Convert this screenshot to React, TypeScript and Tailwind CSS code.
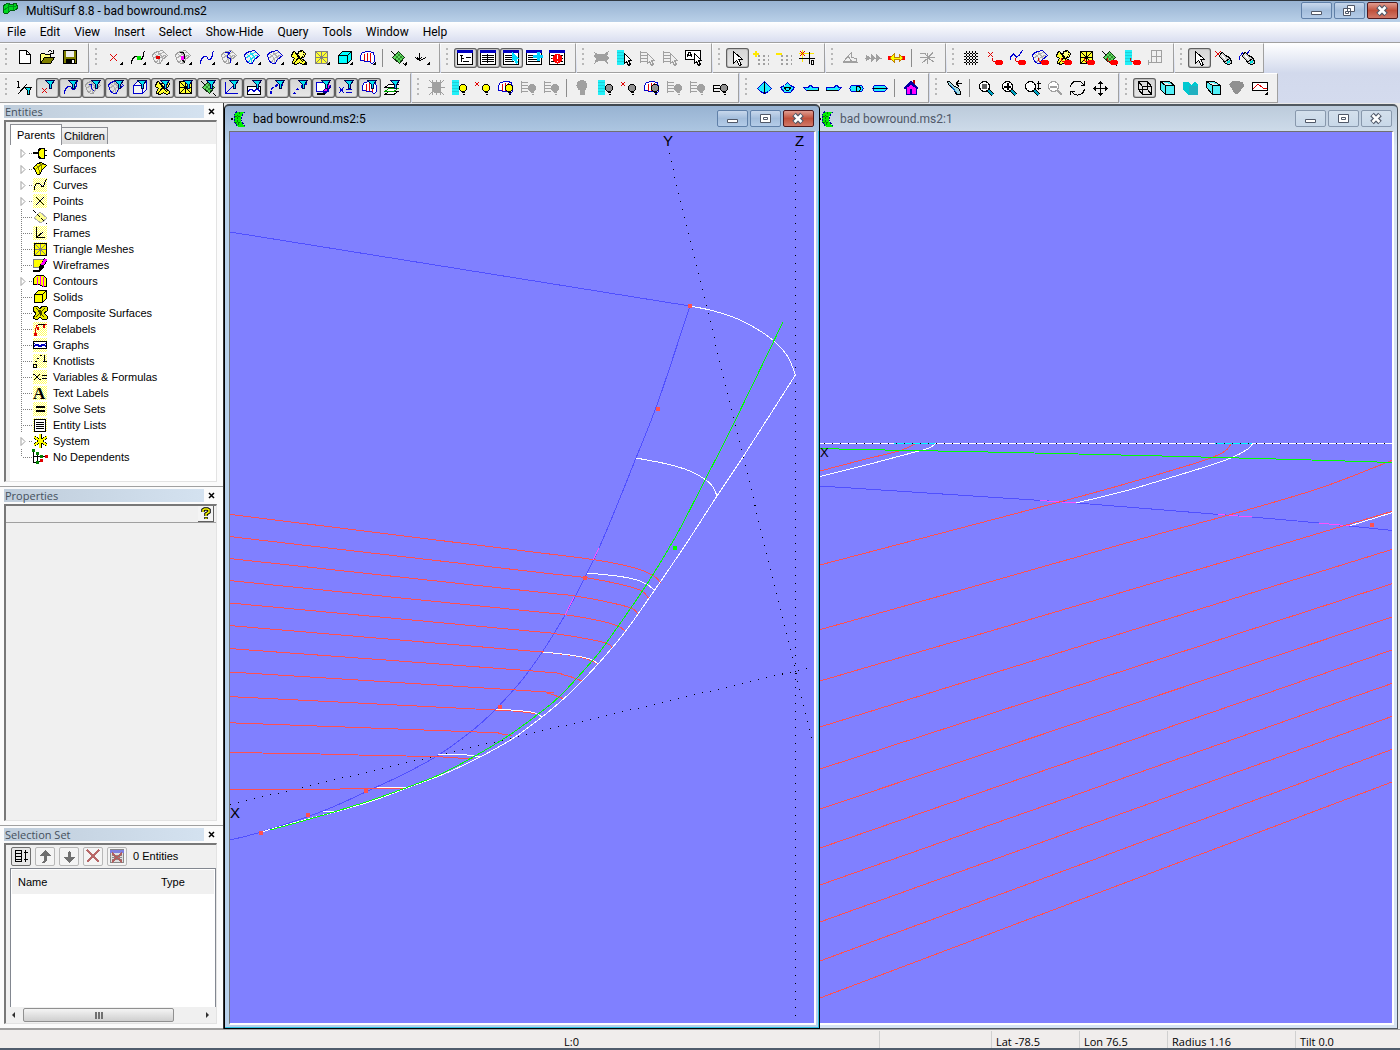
import React from 'react';
import clsx from 'clsx';

type Point = [number, number];

interface Tool {
  label: string;
  icon: React.ReactNode;
  pressed?: boolean;
  menu?: boolean;
}

type ToolItem = Tool | 'sep';

// Catmull-Rom through the points, written out as cubic segments
const spline = (pts: Point[]) => {
  let d = `M${pts[0][0]} ${pts[0][1]}`;
  for (let i = 0; i < pts.length - 1; i++) {
    const p0 = pts[i - 1] || pts[i];
    const p1 = pts[i];
    const p2 = pts[i + 1];
    const p3 = pts[i + 2] || p2;
    d += `C${p1[0] + (p2[0] - p0[0]) / 6} ${p1[1] + (p2[1] - p0[1]) / 6} ${p2[0] - (p3[0] - p1[0]) / 6} ${p2[1] - (p3[1] - p1[1]) / 6} ${p2[0]} ${p2[1]}`;
  }
  return d;
};

/* ---------- toolbar glyphs, all on a 23x20 grid ---------- */

const Cross = ({ c = '#e00000', x = 7, y = 6, s = 7 }) => (
  <path d={`M${x} ${y}l${s} ${s}M${x + s} ${y}l${-s} ${s}`} stroke={c} fill="none" />
);

const Curve = ({ c = '#000' }) => (
  <path d="M5.500 15.500v-2l2-4 2-1h2l2 3h2l2-4v-3l1-1" stroke={c} fill="none" />
);

const Surface = ({ c = '#0000d0', inner = '#b0b0b0', fill = 'none' }) => (
  <g fill="none">
    <path d="M6 6q4.500 3 5 9M9 4.500q4.500 3 4.500 8M5 10q4-3.500 10-6M7.500 14q3-4.500 9-7" stroke={inner} />
    <path d="M3.500 7.500l1-2 4-2 5-1 5 5-5 4-2.500 4H8.500L5.500 13z" fill={fill} stroke={c} />
  </g>
);

const Composite = ({ c = '#000' }) => (
  <g stroke={c} fill="#ffff30">
    <path d="M5.500 4.500l2-1 3 3 1-3 4-1 3 3-1 3-3 2 4 3v2l-3 1-3-2-3 2-4-1v-2l2-3-3-2z" />
    <path d="M8 5l8 9M16 5l-9 10" fill="none" />
    <circle cx="14" cy="6.500" r="3" fill="#ffff80" strokeDasharray="1 1" />
  </g>
);

const Mesh = ({ c = '#808080' }) => (
  <g>
    <path d="M5.500 3.500h12v12h-12z" fill="#ffff30" stroke={c} />
    <path d="M5.500 3.500l12 12M17.500 3.500l-12 12M11.500 3.500v12M5.500 9.500h12" stroke={c} fill="none" />
  </g>
);

const Cube = ({ c = '#000', face = '#0ff' }) => (
  <path d="M5.500 7.500l4-4h9v8l-4 4h-9zM5.500 7.500h9v8M14.500 7.500l4-4" stroke={c} fill={face} />
);

const Contours = () => (
  <g fill="#fff">
    <path d="M5 12.500q-1-7 2-8 5-2 10 0 2 2 1 10l-2 1-3-2h-4l-2-1z" stroke="#0000d0" />
    <path d="M8.500 6v7M11.500 5v8M14.500 5v9" stroke="#e00000" fill="none" />
  </g>
);

const Plane = () => (
  <g>
    <path d="M5.500 9.500l6-6 6 6-5 6z" fill="#60d860" stroke="#103010" />
    <path d="M7.500 11.500l6-6M9.500 13.500l6-6M8.500 7.500l6 6M10.500 5.500l6 6" stroke="#106010" strokeOpacity=".6" />
    <path d="M4 3l4 4M16 15l3 3" stroke="#000" />
  </g>
);

const Funnel = () => (
  <path d="M9.500 2.500h9l-3 4v4h-2v-4z" fill="#00e0f0" stroke="#000050" />
);

const Pin = () => (
  <g>
    <path d="M9.500 9.500v3l3 2" stroke="#e00000" fill="none" />
    <ellipse cx="16" cy="14.500" rx="4" ry="2.500" fill="#f00" />
  </g>
);

const Bulb = ({ c = '#ff0', line = '#000' }) => (
  <g>
    <circle cx="15" cy="10" r="3.500" fill={c} stroke={line} />
    <path d="M13.500 14.500h3M14.500 16.500h2" stroke={line} />
  </g>
);

const Rows = ({ c = '#000' }) => (
  <path d="M4.500 3v12M4 4.500h7M4 7.500h7M4 10.500h7M4 13.500h7" stroke={c} fill="none" />
);

const CyanList = () => (
  <g>
    <path d="M4 2h7v15H4z" fill="#20f0f8" />
    <path d="M4 4.500h7M4 7.500h7M4 10.500h7M4 13.500h7" stroke="#20d0d8" />
  </g>
);

const Arrow = ({ x = 0, y = 0, c = '#000', fill = '#fff' }) => (
  <path d={`M${9.5 + x} ${3.5 + y}v10l2-2 2 4 2-1-2-4h3z`} fill={fill} stroke={c} />
);

const PaneFrame = ({ children }: { children?: React.ReactNode }) => (
  <g>
    <path d="M3.500 2.500h15v14h-15z" fill="#fff" stroke="#000" />
    <path d="M3 2h16v3H3z" fill="#0000c0" />
    {children}
  </g>
);

const Burst = ({ c = '#a0a0a0' }) => (
  <g>
    <path d="M7 4h9v9l-2 2H9l-2-2z" fill={c} />
    <path d="M4 2l15 15M19 2L4 17M3 9.500h17M7.500 2v15M11.500 2v15M15.500 2v15" stroke={c} />
  </g>
);

const Hull = ({ d, extra }: { d: string; extra?: string }) => (
  <g>
    <path d={d} fill="#20f0ff" stroke="#0000d0" />
    {extra && <path d={extra} stroke="#000" fill="none" />}
  </g>
);

const Lens = ({ c = '#000', handle = '#00a0c0', children }: { c?: string; handle?: string; children?: React.ReactNode }) => (
  <g>
    <path d="M14 12l5 5" stroke="#000" strokeWidth="4" strokeOpacity={c === '#000' ? 1 : 0} />
    <path d="M14 12l5 5" stroke={handle} strokeWidth="2" />
    <circle cx="10.500" cy="8.500" r="5" fill="#fff" stroke={c} />
    {children}
  </g>
);

const Torch = () => (
  <g>
    <path d="M9.500 5.500l2-1 3 3 4 2 2 3v3l-3 1-3-1-3-4-3-3z" fill="#d0d0d0" stroke="#000" />
    <path d="M14 13.500l5-3M15 15.500l5-3" stroke="#000" />
    <path d="M16 15l3-2" stroke="#0dd" strokeWidth="2" />
    <path d="M10 6l5 6" stroke="#fff" />
  </g>
);

const gray = '#a0a0a0';

const topBands: ToolItem[][] = [
  [
    { label: 'New', icon: <path d="M6.500 2.500h7l4 4v9h-11zM13.500 2.500v4h4" fill="#fff" stroke="#000" /> },
    { label: 'Open', icon: (
      <g stroke="#000">
        <path d="M4.500 15.500v-9l1-1h3l1 1h5v3" fill="#ffff80" />
        <path d="M4.500 15.500l4-6h10l-4 6z" fill="#808000" />
        <path d="M11.500 4.500q2.500-4 5 0M17.500 2v3.500H14" fill="none" />
      </g>
    ) },
    { label: 'Save', icon: (
      <g>
        <path d="M4.500 2.500h13v13h-13z" fill="#808000" stroke="#000" />
        <path d="M7 3h8v6H7z" fill="#efefef" />
        <path d="M7 11h9v5H7z" fill="#000" />
        <path d="M13 12h2v3h-2z" fill="#fff" />
      </g>
    ) },
  ],
  [
    { label: 'Point', menu: true, icon: <Cross /> },
    { label: 'Bead', menu: true, icon: <g><Curve /><circle cx="13" cy="10" r="2.500" fill="#00e000" /></g> },
    { label: 'Magnet', menu: true, icon: <g><Surface c={gray} /><circle cx="9" cy="9.500" r="2" fill="#e00000" /></g> },
    { label: 'Ring', menu: true, icon: <g><Surface c={gray} /><path d="M8 4.500h3q3 4 0 8l2 2" stroke="#000" fill="none" /><circle cx="10.500" cy="10" r="2" fill="#f0f" /></g> },
    { label: 'Curve', menu: true, icon: <Curve c="#0000d0" /> },
    { label: 'Snake', menu: true, icon: <g><Surface c={gray} /><path d="M7 5l5-1-3 5 4 2-1 4" stroke="#0000d0" fill="none" /></g> },
    { label: 'Trimmed surface', menu: true, icon: <Surface inner="#20d8f0" /> },
    { label: 'Surface', menu: true, icon: <Surface /> },
    { label: 'Composite surface', menu: true, icon: <Composite /> },
    { label: 'Triangle mesh', menu: true, icon: <Mesh /> },
    { label: 'Solid', menu: true, icon: <Cube /> },
    { label: 'Contours', menu: true, icon: <Contours /> },
    'sep',
    { label: 'Plane', menu: true, icon: <Plane /> },
    { label: 'Frame', menu: true, icon: <path d="M9.500 5v7M9.500 12.500l7-3M9.500 12.500l-4-3M7 9l2 3 3-3" stroke="#000" fill="none" /> },
  ],
  [
    { label: 'Entities pane', pressed: true, icon: <PaneFrame><path d="M6 7.500h3M7.500 7v7M7 10.500h3M12 9.500h5M9 13.500h6" stroke="#000" /></PaneFrame> },
    { label: 'Properties pane', pressed: true, icon: <PaneFrame><path d="M5 7.500h12M5 9.500h12M5 11.500h12M5 13.500h12M10.500 6v9" stroke="#000" /></PaneFrame> },
    { label: 'Selection pane', pressed: true, icon: <PaneFrame><path d="M5 7.500h9M5 9.500h9M5 11.500h9M5 13.500h9" stroke="#000" /><path d="M12 4v9l2-1 2 4 2-1-1-4h3z" fill="#00e0ff" /></PaneFrame> },
    { label: 'Surface manager', icon: <PaneFrame><path d="M5 7.500h12M5 9.500h7M5 11.500h12M5 13.500h12" stroke="#000" /><path d="M10 7h4V4h3v3h3v3h-3v3h-3v-3h-4z" fill="#00d0ff" /></PaneFrame> },
    { label: 'Error manager', icon: <PaneFrame><path d="M5 7.500h12M5 10.500h12M5 13.500h12" stroke="#000" /><circle cx="11.500" cy="10.500" r="5" fill="#f00" /><path d="M11 7h1v4h-1zM11 13h1v1h-1z" fill="#fff" /></PaneFrame> },
  ],
  [
    { label: 'Clear selection', icon: <path d="M4 4l4 2h6l5-3-2 5 2 2-2 2 1 4-4-3H9l-5 3 2-5-2-3 1-2z" fill={gray} /> },
    { label: 'Select by list', icon: <g><CyanList /><Arrow x={2} y={2} /></g> },
    { label: 'Select parents', icon: <g><Rows c={gray} /><Arrow x={2} y={2} c={gray} fill="#efefef" /></g> },
    { label: 'Select children', icon: <g><Rows c={gray} /><Arrow x={2} y={2} c={gray} fill="#efefef" /></g> },
    { label: 'Select by name', icon: <g><path d="M3.500 2.500h15v9h-15z" fill="#fff" stroke="#000" /><path d="M5 9l2-5h1l2 5M6 7.500h3" stroke="#000" fill="none" /><Arrow x={3} y={2} /></g> },
  ],
  [
    { label: 'Select mode', pressed: true, icon: <path d="M7.500 3.500v12l3-3 3 5 2-1-3-5h4z" fill="#fff" stroke="#000" /> },
    { label: 'Snap add', icon: <g><path d="M9 8h11M9 12h11M9 16h11" stroke={gray} strokeWidth="2" strokeDasharray="2 3" /><path d="M4 6h6M7 3v6" stroke="#ffe800" strokeWidth="2" /></g> },
    { label: 'Snap remove', icon: <g><path d="M9 8h11M9 12h11M9 16h11" stroke={gray} strokeWidth="2" strokeDasharray="2 3" /><path d="M4 6h6" stroke="#ffe800" strokeWidth="2" /></g> },
    { label: 'Digitize point', icon: <g><path d="M4 5.500h15M7.500 2v12" stroke="#ffe800" /><path d="M4 10.500h16M14.500 4v12" stroke="#000" /><Cross x={5} y={3} s={5} /><path d="M16.500 12v4h2v-4z" stroke="#000" fill="none" /></g> },
  ],
  [
    { label: 'Angle', icon: <path d="M4.500 13.500l8-9v5l5 1v3zM4 14.500h15M9 8l4 6" stroke={gray} fill="none" /> },
    { label: 'Distance', icon: <path d="M3 10h17M4 7v6l4-3zM9 6v8l4-4zM14 6v8l4-4z" stroke={gray} fill={gray} /> },
    { label: 'Clearance', icon: <g><path d="M3 8h4v4H3zM16 8h4v4h-4z" fill="#f00" /><path d="M5 10l4-4v3h5V6l4 4-4 4v-3H9v3z" fill="#ff0" stroke="#c08000" /></g> },
    'sep',
    { label: 'Intersections', icon: <path d="M4 5.500h5l3 4 5-5M4 9.500h15M6 15l6-5 6 4M11.500 5v11" stroke={gray} fill="none" /> },
  ],
  [
    { label: 'Grid', icon: <path d="M6.500 3v14M9.500 3v14M12.500 3v14M15.500 3v14M4 5.500h14M4 8.500h14M4 11.500h14M4 14.500h14" stroke="#000" strokeDasharray="2 1" /> },
    { label: 'Pin point', icon: <g><Cross x={5} y={4} s={5} /><Pin /></g> },
    { label: 'Pin curve', icon: <g><path d="M4.500 12v-3l3-3 3 3 3-2 3-5" stroke="#0000d0" fill="none" /><Pin /></g> },
    { label: 'Pin surface', icon: <g><Surface /><Pin /></g> },
    { label: 'Pin composite', icon: <g><Composite /><Pin /></g> },
    { label: 'Pin mesh', icon: <g><Mesh c="#000" /><Pin /></g> },
    { label: 'Pin plane', icon: <g><Plane /><Pin /></g> },
    { label: 'Pin list', icon: <g><CyanList /><Pin /></g> },
    { label: 'Pin layout', icon: <path d="M7.500 2.500h10v12h-10zM7 8.500h10M12.500 3v12M4 14.500h9M4.500 12v5" stroke={gray} fill="none" /> },
  ],
  [
    { label: 'Pick', pressed: true, icon: <path d="M7.500 3.500v12l3-3 3 5 2-1-3-5h4z" fill="#fff" stroke="#000" /> },
    { label: 'Light point', icon: <g><Cross x={4} y={3} s={6} /><Torch /></g> },
    { label: 'Light curve', icon: <g><path d="M5.500 12V9l3-4 4 2 3-5" stroke="#0000d0" fill="none" /><Torch /></g> },
  ],
];

const bottomBands: ToolItem[][] = [
  [
    { label: 'Toggle filters', icon: <g><path d="M4 3.500h1.500V9M4 9.500h3M5 16L14 6" stroke="#000" fill="none" /><path d="M11.500 9.500h7l-2 3v4h-2v-4z" fill="#00e0f0" stroke="#000" /></g> },
    { label: 'Filter points', pressed: true, icon: <g><Cross x={6} y={10} s={5} /><Funnel /></g> },
    { label: 'Filter curves', pressed: true, icon: <g><Curve c="#0000d0" /><Funnel /></g> },
    { label: 'Filter snakes', pressed: true, icon: <g><Surface c={gray} /><path d="M7 6h3l-1 4 3 3" stroke="#0000d0" fill="none" /><Funnel /></g> },
    { label: 'Filter surfaces', pressed: true, icon: <g><Surface /><Funnel /></g> },
    { label: 'Filter solids', pressed: true, icon: <g><Cube c="#0000d0" face="#f4f4f4" /><Funnel /></g> },
    { label: 'Filter composites', pressed: true, icon: <g><Composite /><Funnel /></g> },
    { label: 'Filter meshes', pressed: true, icon: <g><Mesh c="#000" /><Funnel /></g> },
    { label: 'Filter planes', pressed: true, icon: <g><Plane /><Funnel /></g> },
    { label: 'Filter frames', pressed: true, icon: <g><path d="M5.500 4v11.500h12M5.500 15.500l7-7" stroke="#0000d0" fill="none" /><Funnel /></g> },
    { label: 'Filter graphs', pressed: true, icon: <g><path d="M4.500 8.500h13v8h-13z" fill="#fff" stroke="#000" /><path d="M5 14q3-6 6 0 3-6 6 0" stroke="#0000d0" fill="none" /><Funnel /></g> },
    { label: 'Filter relabels', pressed: true, icon: <g><path d="M4.500 16v-4l3-3 4-2h5" stroke="#0000d0" fill="none" strokeWidth="2" strokeDasharray="3 2" /><Funnel /></g> },
    { label: 'Filter knotlists', pressed: true, icon: <g><path d="M5 16l4-5 4-3 5-2" stroke="#0000d0" fill="none" strokeWidth="2" strokeDasharray="2 3" /><Funnel /></g> },
    { label: 'Filter wireframes', pressed: true, icon: <g><path d="M4.500 4.500h12v9h-12z" fill="#fff" stroke="#0000d0" /><path d="M5 16h8" stroke="#000" strokeWidth="2" /><path d="M12 15l6-8" stroke="#0000a0" strokeWidth="4" /><path d="M13 13l4-6" stroke="#f0f" strokeWidth="2" /><Funnel /></g> },
    { label: 'Filter variables', pressed: true, icon: <g><path d="M4 9l5 6M9 9l-5 6M11 11h6M11 14h6" stroke="#0000d0" fill="none" /><Funnel /></g> },
    { label: 'Filter contours', pressed: true, icon: <g><Contours /><Funnel /></g> },
    { label: 'Layers', icon: <g><path d="M4 16.500h9l4-3H8z" fill="#fff" stroke="#000" /><path d="M4 13.500h9l4-3H8z" fill="#fff" stroke="#00a000" /><path d="M4 9.500h9l4-3H8z" fill="#fff" stroke="#000" /><Funnel /></g> },
  ],
  [
    { label: 'Show all', icon: <Burst /> },
    { label: 'Show list', icon: <g><CyanList /><Bulb /></g> },
    { label: 'Show points', icon: <g><Cross x={4} y={4} s={4} /><Bulb /></g> },
    { label: 'Show contours', icon: <g><Contours /><Bulb /></g> },
    { label: 'Show parents', icon: <g><Rows c={gray} /><Bulb c={gray} line={gray} /></g> },
    { label: 'Show children', icon: <g><Rows c={gray} /><Bulb c={gray} line={gray} /></g> },
    'sep',
    { label: 'Hide all', icon: <g><circle cx="11" cy="7.500" r="5.500" fill={gray} /><path d="M9 12h5v5H9z" fill={gray} /></g> },
    { label: 'Hide list', icon: <g><CyanList /><Bulb c="#909090" /></g> },
    { label: 'Hide points', icon: <g><Cross x={4} y={4} s={4} /><Bulb c="#909090" /></g> },
    { label: 'Hide contours', icon: <g><Contours /><Bulb c="#909090" /></g> },
    { label: 'Hide parents', icon: <g><Rows c={gray} /><Bulb c={gray} line={gray} /></g> },
    { label: 'Hide children', icon: <g><Rows c={gray} /><Bulb c={gray} line={gray} /></g> },
    { label: 'Hide unselected', icon: <g><path d="M4 7.500h7M4 10.500h7M4 13.500h7M4.500 7v7" stroke="#000" /><Bulb c="#909090" /></g> },
  ],
  [
    { label: 'Front view', icon: <Hull d="M4.500 10.500l3-3 4-4 4 4 3 3-3 3-4 2-4-2z" extra="M11.500 4v12" /> },
    { label: 'Back view', icon: <Hull d="M4.500 9.500l4-2 3-3 3 3 4 2-4 5h-6z" extra="M8 9.500h7M8 9l2 3h3l2-3" /> },
    { label: 'Port view', icon: <Hull d="M4.500 9.500h5l1-2h2l1 2h6v2l-1 1h-11z" extra="M8 12.500h11v-3" /> },
    { label: 'Starboard view', icon: <Hull d="M4.500 9.500h8l1-2h2l1 2h3l-3 3h-12z" extra="M4 12.500h12" /> },
    { label: 'Top view', icon: <Hull d="M4.500 10.500l2-3h10l2 3-2 3h-10z" extra="M11.500 8v5h3l1-2-1-3z" /> },
    { label: 'Bottom view', icon: <Hull d="M4.500 10.500l2-3h10l3 3-3 3h-10z" extra="M5 10.500h14" /> },
    'sep',
    { label: 'Home view', icon: <g><path d="M7 10l5-4 5 4v6H7z" fill="#f0f" stroke="#0000a0" /><path d="M14 2h2v5h-2z" fill="#c00000" /><path d="M5 11l7-7 7 7" stroke="#0000a0" strokeWidth="2" fill="none" /><path d="M11 11h2v5h-2z" fill="#0000a0" /></g> },
  ],
  [
    { label: 'Look at', icon: <g><path d="M4.500 3.500h2l4 4 5 3 2 3v3h-4l-2-4-6-6z" fill="#a0d8e0" stroke="#000" /><path d="M7 7l7 8" stroke="#0060c0" /><path d="M13 5.500h6M13 5.500l3-3M13 5.500l3 3" stroke="#000" /></g> },
    'sep',
    { label: 'Zoom area', icon: <Lens><path d="M8 6h5v5H8z" fill="#606060" /></Lens> },
    { label: 'Zoom in', icon: <Lens><path d="M7 8.500h7M10.500 5v7" stroke="#000" strokeWidth="2" /></Lens> },
    { label: 'Zoom', icon: <g><Lens /><path d="M18.500 3v9M17 5h4M17 10h4" stroke="#000" /></g> },
    { label: 'Zoom out', icon: <Lens c={gray} handle={gray}><path d="M7 8.500h7" stroke={gray} strokeWidth="2" /></Lens> },
    { label: 'Rotate', icon: <path d="M4.500 9q1-6 7-6 4 0 6 4M18.500 11q-1 6-7 6-4 0-6-4M18.500 3v4h-4M4.500 17v-4h4" stroke="#000" fill="none" /> },
    { label: 'Pan', icon: <g><path d="M5 10.500h13M11.500 4v13" stroke="#000" /><path d="M11.500 3l3 3h-6zM11.500 18l3-3h-6zM4 10.500l3-3v6zM19 10.500l-3-3v6z" /></g> },
  ],
  [
    { label: 'Wireframe', pressed: true, icon: <path d="M5.500 3.500h9v8h-9zM9.500 8.500h9v8h-9zM5.500 3.500l4 5M14.500 3.500l4 5M5.500 11.500l4 5M14.500 11.500l4 5" stroke="#000" fill="none" /> },
    { label: 'Hidden line', icon: <path d="M4.500 3.500h9l5 4v9h-9l-5-5zM4.500 3.500l5 4h9M9.500 7.500v9" stroke="#000" fill="#50f0f8" /> },
    { label: 'Shaded', icon: <g><path d="M4 4h5l3 3 4-4 3 4v10h-9l-6-5z" fill="#00c8d0" /><path d="M10 8h9v9h-9z" fill="#20b0c0" /></g> },
    { label: 'Shaded edges', icon: <path d="M4.500 3.500h8l6 4v9h-8l-6-7zM4.500 3.500l6 4h8M10.500 7.500v9" stroke="#000" fill="#50f0f8" /> },
    { label: 'Render', icon: <path d="M4 6l3-3h5l6 1 1 4-6 8h-3z" fill="#909090" /> },
    { label: 'Profile', menu: true, icon: <g><path d="M4.500 4.500h15v8h-15z" fill="#fff" stroke="#000" /><path d="M5 11l5-5 5 4h4" stroke="#e00000" fill="none" /></g> },
  ],
];

const ToolButton: React.FC<{ tool: Tool }> = ({ tool }) => (
  <button
    type="button"
    aria-label={tool.label}
    aria-pressed={tool.pressed}
    className={clsx(
      'h-5 w-[23px] shrink-0',
      tool.pressed && 'rounded-[3px] bg-gradient-to-b from-[#d4d4d4] to-[#e8e8e8] shadow-[inset_0_0_0_1px_#606060,inset_0_0_0_2px_#c0c0c0]'
    )}
  >
    <svg width="23" height="20" viewBox="0 0 23 20" shapeRendering="crispEdges">
      {tool.icon}
      {tool.menu && <path d="M20 13v4h-4z" fill="#000" />}
    </svg>
  </button>
);

const Band: React.FC<{ items: ToolItem[] }> = ({ items }) => (
  <div className="mr-px flex h-[30px] shrink-0 items-center border-t border-r border-b border-t-white border-r-[#a0a0a0] border-b-[#a0a0a0] bg-[#f0f0f0] pr-[6px]">
    <div className="mr-[6px] ml-[5px] h-5 w-[2px] bg-[repeating-linear-gradient(#b8b8b8_0_2px,transparent_2px_5px)]" />
    {items.map((item, i) =>
      item === 'sep' ? (
        <div key={i} className="mr-1 ml-[3px] h-[18px] w-px bg-[#8c8c8c]" />
      ) : (
        <ToolButton key={i} tool={item} />
      )
    )}
  </div>
);

/* ---------- window chrome ---------- */

const captionIcons = {
  min: <path d="M10.500 9.500h10v3h-10z" fill="#fff" stroke="#505868" />,
  max: <path d="M10.500 4.500h10v8h-10zM13.500 7.500h4v2h-4z" fill="#fff" stroke="#505868" />,
  restore: <path d="M13.500 3.500h7v6h-7zM9.500 6.500h7v7h-7zM11.500 9.500h3v2h-3z" fill="#fff" stroke="#505868" />,
  close: (
    <g>
      <path d="M11 4.500l8 8M19 4.500l-8 8" stroke="#505868" strokeWidth="5" />
      <path d="M11.500 5l7 7M18.500 5l-7 7" stroke="#fff" strokeWidth="2.500" />
    </g>
  ),
};

const CaptionButtons: React.FC<{ middle: 'max' | 'restore'; active?: boolean }> = ({ middle, active }) => (
  <div className="flex gap-[2px]">
    {(['min', middle, 'close'] as const).map(kind => (
      <button
        key={kind}
        type="button"
        aria-label={kind}
        className={clsx(
          'h-[17px] w-[31px] rounded-[2px] border',
          kind === 'close' && active
            ? 'border-[#50181c] bg-gradient-to-b from-[#e09c90] via-[#c0503c] to-[#d07868]'
            : active
              ? 'border-[#6080a8] bg-gradient-to-b from-[#c8d8ec] via-[#a4bedc] to-[#b4cce8]'
              : 'border-[#8898ac] bg-gradient-to-b from-[#d4e0ec] to-[#c8d8e8]'
        )}
      >
        <svg width="29" height="15" viewBox="1 1 29 15">{captionIcons[kind]}</svg>
      </button>
    ))}
  </div>
);

const DocIcon = () => (
  <svg width="17" height="18" viewBox="0 0 17 18" shapeRendering="crispEdges">
    <path d="M7 1.500h8l-4 5v5l4 5H8l-4-4V5z" fill="#00f000" />
    <path d="M7 1.500L4 5v7l4 5M15 2l-4 5v4l4 5" stroke="#0000a0" fill="none" strokeDasharray="2 1" />
    <path d="M5 6.500h6M5 12.500h6M10 2L7 7v4l3 5" stroke="#008000" fill="none" strokeDasharray="2 1" />
    <path d="M1 8h2v2H1z" fill="#000" />
  </svg>
);

/* ---------- entity tree ---------- */

interface TreeRow {
  name: string;
  icon: React.ReactNode;
  open?: boolean;
  plain?: boolean;
}

const treeRows: TreeRow[] = [
  { name: 'Components', open: true, plain: true, icon: <path d="M0 8h5M11 5.500h3M11 10.500h3M5.500 5.500l2-2h4v10h-4l-2-2z" stroke="#000" strokeWidth="1.500" fill="#ff0" /> },
  { name: 'Surfaces', open: true, plain: true, icon: <g><path d="M.5 6.500l4-4 4-1 5 3-4 4-3 5h-2z" fill="#ff0" stroke="#000" /><path d="M3 4q4 3 3 9M7 2q2 3 2 7M2 9q3-4 9-6" stroke="#808000" fill="none" /></g> },
  { name: 'Curves', open: true, icon: <path d="M1.500 13v-3l2-4h3l2 3h2l2-5 1-2" stroke="#000" fill="none" /> },
  { name: 'Points', open: true, icon: <path d="M3 4l8 8M11 4l-8 8" stroke="#000" fill="none" /> },
  { name: 'Planes', plain: true, icon: <g><path d="M1 9l6-6 7 6-6 5z" fill="#ffff90" stroke="#b0b0b0" /><path d="M0 1l14 14" stroke="#000" strokeDasharray="4 2" /></g> },
  { name: 'Frames', icon: <path d="M3.500 2v10.500H12M3.500 12.500l7-6" stroke="#000" fill="none" /> },
  { name: 'Triangle Meshes', icon: <g><path d="M1.500 2.500h12v12h-12z" fill="#ff0" stroke="#000" /><path d="M2 3l11 11M13 3L2 14M7.500 3v11M2 8.500h11" stroke="#808080" /></g> },
  { name: 'Wireframes', plain: true, icon: <g><path d="M.5 2.500h10v8h-10z" fill="#ff0" stroke="#808080" /><path d="M0 14h6l4-4" stroke="#000" strokeWidth="2" fill="none" /><path d="M7 12l6-10" stroke="#000" strokeWidth="4" /><path d="M9 8l4-6" stroke="#f0f" strokeWidth="3" /></g> },
  { name: 'Contours', open: true, plain: true, icon: <g><path d="M.5 11.500v-6l3-3h7l3 3v8h-4l-3-2h-3z" fill="#ff0" stroke="#000" /><path d="M4.500 4v8M7.500 3v9M10.500 4v10" stroke="#f0f" /></g> },
  { name: 'Solids', plain: true, icon: <path d="M1.500 5.500l4-4h8v8l-4 4h-8zM1.500 5.500h8v8M9.500 5.500l4-4" fill="#ff0" stroke="#000" /> },
  { name: 'Composite Surfaces', plain: true, icon: <g><path d="M1 2l3-1 3 3 2-3 5 1v4l-3 2 3 3v3l-4 1-3-3-3 3-4-2 3-4-3-4z" fill="#e8e800" stroke="#000" /><path d="M3 3l8 9M12 3l-9 9M6 5q4 2 1 6" stroke="#404000" fill="none" /></g> },
  { name: 'Relabels', icon: <g><path d="M2.500 14v-5l1-4 3-2h7" stroke="#e00000" fill="none" /><path d="M1 12h3v3H1zM4 6h2v3H4zM10 4h2v3h-2z" fill="#e00000" /><path d="M5 3.500h7" stroke="#000" /></g> },
  { name: 'Graphs', icon: <g><path d="M.5 4.500h13v7H.5z" fill="#fff" stroke="#000" /><path d="M1 10q3-6 6 0 3-6 6 0M1 6l5 4M8 10l5-4" stroke="#0000c0" fill="none" /></g> },
  { name: 'Knotlists', icon: <path d="M.5 11.500h3v3h-3zM2 8h2M4 5h2M7 2h2M11.500 2v6M10 8.500h4" stroke="#000" fill="none" /> },
  { name: 'Variables & Formulas', icon: <path d="M1 5l6 6M7 5l-6 6M0 5.500h2M6 10.500h2M9 6.500h5M9 9.500h5" stroke="#000" fill="none" /> },
  { name: 'Text Labels', icon: <text x="0" y="14" fontSize="17" fontWeight="700" className="font-['Liberation_Serif',serif]">A</text> },
  { name: 'Solve Sets', icon: <path d="M3 6h9M3 10h9" stroke="#000" strokeWidth="2" /> },
  { name: 'Entity Lists', icon: <g><path d="M1.500 2.500h11v12h-11z" fill="#fff" stroke="#000" /><path d="M3 5.500h8M3 7.500h8M3 9.500h8M3 11.500h8" stroke="#000" /></g> },
  { name: 'System', open: true, plain: true, icon: <g><path d="M7 1v14M1 4l13 8M14 4L1 12" stroke="#000" strokeWidth="3" /><path d="M7 1v14M1 4l13 8M14 4L1 12" stroke="#ff0" strokeWidth="2" /></g> },
  { name: 'No Dependents', plain: true, icon: <g><path d="M.5 1v12h4M1 7.500h13M4 4v8h5" stroke="#000" fill="none" /><path d="M-1 0h3v3h-3zM3 3h3v3H3zM7 6h3v3H7zM3 12h3v3H3z" fill="#008000" /><path d="M12 6h3v3h-3zM7 10h3v3H7z" fill="#e00000" /></g> },
];

const EntityTree = () => (
  <ul className="pt-px">
    {treeRows.map((row, i) => (
      <li key={row.name} className="flex h-4 items-center">
        <svg width="23" height="16" viewBox="0 0 23 16" className="shrink-0">
          {row.open ? (
            <path d="M11 4.500l4 4-4 4z" fill="#fff" stroke="#a0a0a0" />
          ) : (
            <path d={i === treeRows.length - 1 ? 'M11.500 0v8' : 'M11.500 0v16'} stroke="#808080" strokeDasharray="1 1" />
          )}
          <path d={row.open ? 'M19 8.500h4' : 'M13 8.500h10'} stroke="#808080" strokeDasharray="1 1" />
        </svg>
        <svg
          width="14"
          height="14"
          viewBox="0 1 14 14"
          shapeRendering="crispEdges"
          className={clsx(
            'shrink-0 overflow-visible',
            !row.plain && 'bg-[conic-gradient(#ffff60_25%,#fff_0_50%,#ffff60_0_75%,#fff_0)] bg-[length:2px_2px]'
          )}
        >
          {row.icon}
        </svg>
        <span className="ml-[6px] whitespace-nowrap">{row.name}</span>
      </li>
    ))}
  </ul>
);

const Panel: React.FC<{ title: string; className: string; children: React.ReactNode }> = ({ title, className, children }) => (
  <section className={clsx('flex min-h-0 flex-col border-b border-[#a0a0a0] bg-[#fbfbfb] pt-[2px] pr-1 pb-1 pl-1', className)}>
    <header className="flex h-[13px] shrink-0 items-center">
      <h2 className="h-[13px] flex-1 bg-gradient-to-r from-[#bfcddb] to-[#d4e2f0] pl-px font-['Open_Sans',sans-serif] text-[11px] leading-[13px] text-[#44505c]">
        {title}
      </h2>
      <button type="button" aria-label={`Close ${title}`} className="flex h-[13px] w-[15px] items-center justify-center">
        <svg width="7" height="7" viewBox="0 0 7 7">
          <path d="M1 1l5 5M6 1L1 6" stroke="#000" strokeWidth="1.500" />
        </svg>
      </button>
    </header>
    <div className="mt-[2px] mr-[2px] flex min-h-0 flex-1 flex-col border border-t-2 border-l-2 border-[#e3e3e3] border-t-[#787878] border-l-[#787878] bg-[#f0f0f0] text-[11px]">
      {children}
    </div>
  </section>
);

const listButtons = [
  { label: 'Reorder', on: true, icon: <path d="M4.500 3.500h6v11h-6zM5 6.500h5M5 9.500h5M5 12.500h5M14.500 3v12M12.500 5.500h4M12.500 12.500h4" stroke="#000" fill="none" /> },
  { label: 'Move up', icon: <path d="M10 3l6 6h-4v4l-2 3H7l2-3V9H4z" fill="#707070" /> },
  { label: 'Move down', icon: <path d="M10 16l6-6h-4V6l-1-3-2 3v4H4z" fill="#707070" /> },
  { label: 'Remove', icon: <path d="M4 3l12 12M16 3L4 15" stroke="#b86868" strokeWidth="1.500" fill="none" /> },
  { label: 'Remove all', icon: <g><path d="M3.500 2.500h13v13h-13z" fill="#e0e0e0" stroke="#888" /><path d="M3 3h14v3H3z" fill="#8080e0" /><path d="M5 8.500h10M5 10.500h10M5 12.500h10" stroke="#888" /><path d="M5 6l10 9M15 6L5 15" stroke="#b06060" strokeWidth="2" /></g> },
];

/* ---------- drawings ---------- */

const red = '#ff5050';

const waterlines: Point[][] = [
  [[230, 514.4], [525, 551], [592, 559.4], [633, 567.4], [653, 575.4], [661, 583]],
  [[230, 536.6], [525, 570.8], [585, 577.6], [623, 585], [642, 591], [649, 599]],
  [[230, 558.6], [525, 590.6], [575, 596], [612, 603], [632, 608.4], [638, 614]],
  [[230, 580.6], [525, 610.6], [565, 614.7], [600, 620.7], [618, 626], [625, 631]],
  [[230, 603], [525, 630.6], [555, 633.7], [588, 639], [607, 643.4], [612, 647.4]],
  [[230, 625.6], [525, 650.6], [543, 652], [580, 657], [598, 664]],
  [[230, 648.6], [525, 670.4], [563, 674.7], [582, 681]],
  [[230, 672], [525, 690.6], [547, 693], [564, 699]],
  [[230, 696.6], [495, 710], [525, 712.4], [537, 714], [542, 717]],
  [[230, 722.8], [472, 731.8], [500, 733.7], [512, 736]],
  [[230, 752.4], [262, 753], [320, 754], [358, 755], [406, 756], [435, 756.6], [473, 759]],
  [[230, 789.5], [340, 789.5]],
  [[340, 788.5], [407, 788.5]],
];

const whiteCurves: Point[][] = [
  [[690, 306], [710, 310], [727, 315], [740, 320], [757, 329], [774, 341], [788, 357], [795, 374]],
  [[796, 374], [743, 457], [717, 496], [686, 544], [654, 591], [625, 632], [598, 664], [570, 693], [542, 717], [512, 739], [480, 757], [444, 774], [407, 788], [372, 801], [335, 812], [308, 819], [272, 829], [261, 832]],
  [[636, 458], [667, 464], [690, 471], [706, 480], [713, 487], [717, 496]],
  [[587, 573], [617, 576], [637, 580], [648, 585], [655, 591]],
  [[543, 652], [570, 655], [590, 659], [598, 664]],
  [[496, 709], [523, 711], [535, 713], [542, 717]],
  [[438, 754.5], [462, 754.5], [480, 757]],
  [[377, 787.5], [407, 787.5]],
  [[323, 811], [335, 812]],
];

const chine: Point[] = [[690, 306], [658, 402], [636, 458], [599, 548], [565, 615], [529, 671], [495, 710], [468, 734], [437, 756], [404, 774], [372, 789], [323, 811], [261, 832], [230, 840]];
const greenCurve: Point[] = [[783, 322], [734, 423], [705, 480], [676, 536], [647, 584], [607, 642], [593, 660], [560, 696], [537, 715], [508, 736], [475, 756], [441, 774], [407, 787.5], [372, 800], [337, 811], [303, 821], [270, 830]];
const handles: Point[] = [[688, 304], [656, 407], [583, 576], [498, 705], [364, 789], [306, 813], [259, 831]];

const sideLines: Point[][] = [
  [[820, 471], [866, 459], [899, 451], [915, 444]],
  [[820, 565], [1058, 502.4], [1133, 481.7], [1203, 460.7], [1224, 451.7], [1231, 444]],
  [[820, 629.6], [926, 600], [1144, 538], [1229, 515], [1319, 488.4], [1392, 460.4]],
  [[820, 681], [1096, 600], [1345, 525.4], [1392, 511.4]],
  [[820, 727], [1229, 600], [1392, 549.4]],
  [[820, 769], [1342, 600], [1392, 583.4]],
  [[820, 809], [1392, 617]],
  [[820, 848], [1392, 650]],
  [[820, 885], [1392, 683.4]],
  [[820, 922], [1392, 716.4]],
  [[820, 961], [1392, 749.4]],
  [[820, 998], [1392, 782]],
];

const sideWhite: Point[][] = [
  [[820, 476.4], [866, 465], [906, 454.4], [928, 448.4], [935, 444]],
  [[1076, 503], [1125, 491], [1159, 481], [1205, 467], [1231, 458], [1248, 449], [1253, 443]],
  [[1350, 525.7], [1392, 512.7]],
];

const labelClass = "font-['Liberation_Sans',sans-serif] text-[15px]";

const PerspectiveView = () => (
  <svg className="block h-full w-full bg-[#8080ff]" shapeRendering="crispEdges" fill="none">
    <g transform="translate(-230 -132)">
      <path d="M795.500 151v866" stroke="#000" strokeDasharray="1 7" />
      <path d="M669 153L812 739" stroke="#000" strokeDasharray="1 7.240" />
      <path d="M230 804.500L808 668" stroke="#000" strokeDasharray="1 7.220" />
      <path d="M230 232L690 306" stroke="#5050ff" />
      <path d={spline(chine)} stroke="#5050ff" />
      {waterlines.map((pts, i) => <path key={i} d={spline(pts)} stroke={red} />)}
      <path d="M599 548l-6 12M574 597l-9 18" stroke="#ff50ff" />
      {whiteCurves.map((pts, i) => <path key={i} d={spline(pts)} stroke="#fff" />)}
      <path d={spline(greenCurve)} stroke="#00ff00" />
      {handles.map(([x, y], i) => <rect key={i} x={x} y={y} width="4" height="4" fill={red} />)}
      <rect x="673" y="546" width="4" height="4" fill="#00ff00" />
      <g fill="#000" className={labelClass}>
        <text x="663" y="146">Y</text>
        <text x="795" y="146">Z</text>
        <text x="230" y="818">X</text>
      </g>
    </g>
  </svg>
);

const SideView = () => (
  <svg className="block h-full w-full bg-[#8080ff]" shapeRendering="crispEdges" fill="none">
    <g transform="translate(-820 -132)">
      <path d={spline([[820, 486], [1040, 500.4], [1077, 503], [1218, 514.4], [1252, 517], [1319, 523], [1392, 530.4]])} stroke="#5050ff" />
      <path d="M1040 500.500l36 2.500M1218 514.500l34 2.500M1319 523l31 3" stroke="#ff50ff" />
      {sideLines.map((pts, i) => <path key={i} d={spline(pts)} stroke={red} />)}
      {sideWhite.map((pts, i) => <path key={i} d={spline(pts)} stroke="#fff" />)}
      <path d="M820 443.500h572" stroke="#fff" />
      <path d="M894 443.500h41M1215 443.500h37" stroke="#00ffff" />
      <path d="M824 443.500h568" stroke="#000" strokeDasharray="1 7" />
      <path d={spline([[820, 448.5], [858, 449.5], [912, 450.5], [1012, 452.5], [1100, 454.5], [1182, 456.5], [1257, 458.5], [1329, 460.5], [1392, 462.5]])} stroke="#00ff00" />
      <rect x="1370" y="523" width="4" height="4" fill={red} />
      <text x="820" y="457" fill="#000" className="font-['Liberation_Sans',sans-serif] text-[13px]">X</text>
    </g>
  </svg>
);

/* ---------- app ---------- */

const menus = ['File', 'Edit', 'View', 'Insert', 'Select', 'Show-Hide', 'Query', 'Tools', 'Window', 'Help'];

const App: React.FC = () => {
  return (
    <div className="flex h-screen flex-col overflow-hidden bg-[#f0f0f0] font-['Liberation_Sans',sans-serif] text-[11px] text-black">
      <header className="flex h-[22px] shrink-0 items-start border-t border-[#303840] bg-gradient-to-b from-[#98b3d2] to-[#b9d0e8] pr-[2px] pl-[2px]">
        <svg width="17" height="16" viewBox="0 0 17 16" shapeRendering="crispEdges">
          <path d="M1 5l5-3 3 2 5-2 2 5-4 3-3-1-4 4-3-1z" fill="#00d820" stroke="#006010" />
          <path d="M6 2l1 9M11 4l1 5M2 9l6-4 6 1" stroke="#009018" fill="none" />
        </svg>
        <h1 className="flex-1 pl-[7px] font-['Roboto',sans-serif] text-xs leading-5">MultiSurf 8.8 - bad bowround.ms2</h1>
        <div className="pt-px"><CaptionButtons middle="restore" active /></div>
      </header>

      <nav className="flex h-[21px] shrink-0 items-center gap-[14px] border-b border-[#a0a0a0] bg-gradient-to-b from-white to-[#d9def0] pl-[7px] font-['Roboto',sans-serif] text-xs">
        {menus.map(m => (
          <button key={m} type="button" className="leading-5">{m}</button>
        ))}
      </nav>

      <div className="shrink-0 bg-gradient-to-b from-white via-[#d2d9ec] to-[#d4dbee]">
        <div className="flex">{topBands.map((items, i) => <Band key={i} items={items} />)}</div>
        <div className="flex">{bottomBands.map((items, i) => <Band key={i} items={items} />)}</div>
      </div>

      <main className="flex min-h-0 flex-1">
        <aside className="flex w-[224px] shrink-0 flex-col border-r border-[#303030] bg-[#fbfbfb]">
          <Panel title="Entities" className="flex-[377_1_0]">
            <div className="flex shrink-0 items-end pt-[2px] pl-1" role="tablist">
              <button role="tab" aria-selected="true" className="z-10 -mb-px h-[21px] w-[52px] border border-b-0 border-[#8c8e94] bg-white">Parents</button>
              <button role="tab" aria-selected="false" className="h-[17px] w-[46px] border border-b-0 border-l-0 border-[#8c8e94] bg-gradient-to-b from-[#f4f4f4] to-[#dadada]">Children</button>
            </div>
            <div className="ml-1 flex-1 bg-white">
              <EntityTree />
            </div>
          </Panel>

          <Panel title="Properties" className="flex-[332_1_0]">
            <div className="flex h-[17px] shrink-0 justify-end border-b border-[#a0a0a0] pr-[2px]">
              <button type="button" aria-label="Help" className="flex h-4 w-4 items-center justify-center border-r border-b border-[#606060] bg-[#f4f4f4]">
                <svg width="10" height="13" viewBox="0 0 10 13" fill="none">
                  <path d="M2 5V3l1.500-1h3L8 3v2L5 7v2M5 10v2" stroke="#000" strokeWidth="3.500" />
                  <path d="M2 5V3l1.500-1h3L8 3v2L5 7v2M5 10.500v1.500" stroke="#ff0" strokeWidth="1.500" />
                </svg>
              </button>
            </div>
          </Panel>

          <Panel title="Selection Set" className="flex-[196_1_0]">
            <div className="flex h-[23px] shrink-0 items-center gap-1 pl-[5px]">
              {listButtons.map(b => (
                <button
                  key={b.label}
                  type="button"
                  aria-label={b.label}
                  className={clsx('h-[19px] w-5 rounded-[2px] border', b.on ? 'border-[#707070] bg-[#e8e8e8]' : 'border-[#b8b8b8] bg-[#f4f4f4]')}
                >
                  <svg width="18" height="17" viewBox="1 1 18 17" shapeRendering="crispEdges">{b.icon}</svg>
                </button>
              ))}
              <span className="pl-[2px]">0 Entities</span>
            </div>
            <div className="ml-1 flex-1 border border-b-0 border-[#828790] bg-white p-px">
              <table className="w-full table-fixed">
                <thead>
                  <tr className="h-6 bg-[#f0f0f0] text-left">
                    <th className="w-[143px] pl-[6px] font-normal">Name</th>
                    <th className="pl-[6px] font-normal">Type</th>
                  </tr>
                </thead>
                <tbody />
              </table>
            </div>
            <div className="flex h-4 shrink-0 items-center justify-between bg-[#f0f0f0] pl-1">
              <button type="button" aria-label="Scroll left" className="flex h-4 w-[13px] items-center">
                <svg width="8" height="8" viewBox="0 0 8 8"><path d="M5 1v6L2 4z" fill="#303030" /></svg>
              </button>
              <div className="flex-1">
                <div className="flex h-[14px] w-[84%] items-center justify-center gap-px rounded-[2px] border border-[#909090] bg-gradient-to-b from-[#f4f4f4] to-[#cfcfcf]">
                  <i className="h-[7px] w-[2px] bg-[#707070]" />
                  <i className="h-[7px] w-[2px] bg-[#707070]" />
                  <i className="h-[7px] w-[2px] bg-[#707070]" />
                </div>
              </div>
              <button type="button" aria-label="Scroll right" className="flex h-4 w-[13px] items-center">
                <svg width="8" height="8" viewBox="0 0 8 8"><path d="M3 1v6l3-3z" fill="#303030" /></svg>
              </button>
            </div>
          </Panel>
        </aside>

        <div className="grid min-w-0 flex-1 grid-cols-[596fr_578fr] bg-[#e8e8e8] pt-px pr-[2px]">
          <section className="flex min-w-0 flex-col rounded-t-[5px] border border-t-2 border-black border-t-[#404850] bg-gradient-to-b from-[#98b3d2] to-[#b9d1ea] to-[40px]">
            <header className="flex h-[25px] shrink-0 items-center pr-[5px] pl-[5px]">
              <DocIcon />
              <h2 className="flex-1 pl-[6px] font-['Roboto',sans-serif] text-xs">bad bowround.ms2:5</h2>
              <CaptionButtons middle="max" active />
            </header>
            <div className="flex min-h-0 flex-1 border-r border-b border-[#30c0e0] pr-[2px] pb-[2px] pl-1">
              <div className="min-h-0 flex-1 border-t border-r-2 border-b-2 border-l border-[#707070] border-r-white border-b-white">
                <PerspectiveView />
              </div>
            </div>
          </section>

          <section className="flex min-w-0 flex-col rounded-tr-[5px] border-t-2 border-r border-b border-[#505860] bg-gradient-to-b from-[#bccbdb] to-[#d7e4f2] to-[40px]">
            <header className="flex h-[25px] shrink-0 items-center pr-[5px]">
              <div className="-ml-[2px] flex"><DocIcon /></div>
              <h2 className="flex-1 pl-[5px] font-['Roboto',sans-serif] text-xs text-[#505868]">bad bowround.ms2:1</h2>
              <CaptionButtons middle="max" />
            </header>
            <div className="flex min-h-0 flex-1 pr-[3px] pb-[3px]">
              <div className="min-h-0 flex-1 border-t border-r-2 border-b-2 border-[#707070] border-r-white border-b-white">
                <SideView />
              </div>
            </div>
          </section>
        </div>
      </main>

      <footer className="flex h-[21px] shrink-0 border-t border-b-2 border-t-[#a0a0a0] border-b-[#505c6c] bg-[#f0edec] pt-px font-['Open_Sans',sans-serif] text-[11px] leading-[21px]">
        <span className="flex-1 pl-[564px]">L:0</span>
        <span className="w-28 border-l border-[#d0d0d0]" />
        <span className="w-[88px] border-l border-[#d0d0d0] pl-1">Lat -78.5</span>
        <span className="w-[88px] border-l border-[#d0d0d0] pl-1">Lon 76.5</span>
        <span className="w-32 border-l border-[#d0d0d0] pl-1">Radius 1.16</span>
        <span className="w-[105px] border-l border-[#d0d0d0] pl-1">Tilt 0.0</span>
      </footer>
    </div>
  );
};

export default App;
